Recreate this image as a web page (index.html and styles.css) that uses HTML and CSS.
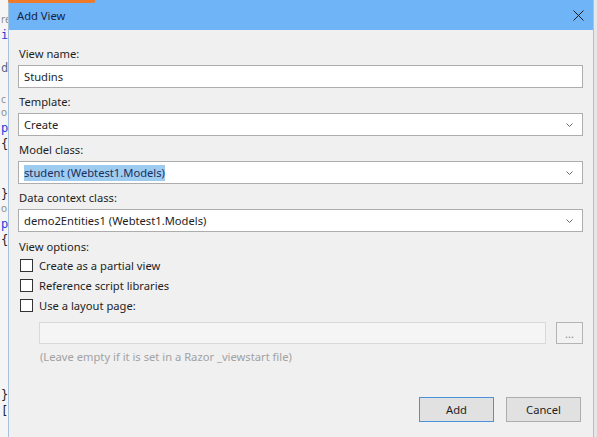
FILE: index.html
```html
<!DOCTYPE html>
<html lang="en">
<head>
  <meta charset="UTF-8">
  <title>Add View</title>
  <link rel="stylesheet" href="styles.css">
</head>
<body>
  <div class="screen">
    <!-- editor peeking out behind the dialog -->
    <div class="editor">
      <div class="gap-top"></div>
      <div class="lens">re</div>
      <div class="code kw">i</div>
      <div class="code"></div>
      <div class="code type">d</div>
      <div class="code"></div>
      <div class="lens">c</div>
      <div class="lens">o</div>
      <div class="code kw">p</div>
      <div class="code">{</div>
      <div class="code"></div>
      <div class="code"></div>
      <div class="code">}</div>
      <div class="lens">o</div>
      <div class="code kw">p</div>
      <div class="code">{</div>
      <div class="code"></div>
      <div class="code"></div>
      <div class="code"></div>
      <div class="code"></div>
      <div class="code"></div>
      <div class="code"></div>
      <div class="code"></div>
      <div class="code"></div>
      <div class="gap-small"></div>
      <div class="code">}</div>
      <div class="code">[</div>
    </div>

    <div class="dialog">
      <div class="titlebar">
        <span class="title">Add View</span>
        <svg class="close" width="11" height="11" viewBox="0 0 11 11">
          <path d="M0.5 0.5 L10.5 10.5 M10.5 0.5 L0.5 10.5" stroke="#1a1a1a" stroke-width="1" fill="none"/>
        </svg>
      </div>

      <div class="dialog-body">
        <div class="field">
          <div class="label">View name:</div>
          <div class="box">Studins</div>
        </div>

        <div class="field">
          <div class="label">Template:</div>
          <div class="box select">
            <span>Create</span>
            <svg class="chevron" width="7" height="4" viewBox="0 0 7 4"><path d="M0.5 0.5 L3.5 3.5 L6.5 0.5" stroke="#6a6a6a" fill="none"/></svg>
          </div>
        </div>

        <div class="field">
          <div class="label">Model class:</div>
          <div class="box select">
            <span class="selected">student (Webtest1.Models)</span>
            <svg class="chevron" width="7" height="4" viewBox="0 0 7 4"><path d="M0.5 0.5 L3.5 3.5 L6.5 0.5" stroke="#6a6a6a" fill="none"/></svg>
          </div>
        </div>

        <div class="field">
          <div class="label">Data context class:</div>
          <div class="box select">
            <span>demo2Entities1 (Webtest1.Models)</span>
            <svg class="chevron" width="7" height="4" viewBox="0 0 7 4"><path d="M0.5 0.5 L3.5 3.5 L6.5 0.5" stroke="#6a6a6a" fill="none"/></svg>
          </div>
        </div>

        <div class="label">View options:</div>
        <div class="check-row"><span class="checkbox"></span>Create as a partial view</div>
        <div class="check-row"><span class="checkbox"></span>Reference script libraries</div>
        <div class="check-row"><span class="checkbox"></span>Use a layout page:</div>

        <div class="layout-row">
          <div class="box disabled"></div>
          <div class="browse">...</div>
        </div>
        <div class="hint">(Leave empty if it is set in a Razor _viewstart file)</div>

        <div class="actions">
          <button class="btn default">Add</button>
          <button class="btn">Cancel</button>
        </div>
      </div>
    </div>

    <div class="edge"></div>
  </div>

  <div class="tab-accent"></div>
</body>
</html>
```

FILE: styles.css
```css
* {
  box-sizing: border-box;
}

body {
  margin: 0;
  font-family: "Noto Sans", sans-serif;
  font-size: 11.2px;
  color: #1e1e1e;
  background: #e8e8e8;
  overflow: hidden;
}

.screen {
  display: flex;
  height: 437px;
}

/* editor strip */
.editor {
  width: 8px;
  flex: none;
  overflow: hidden;
  background: #f5f5f5;
  padding-left: 1px;
  font-family: "DejaVu Sans Mono", monospace;
  font-size: 12px;
  color: #1e1e1e;
  white-space: nowrap;
}

.gap-top {
  height: 13px;
}

.gap-small {
  height: 6px;
}

.code {
  height: 16.5px;
  line-height: 16.5px;
}

.lens {
  height: 13.5px;
  line-height: 13.5px;
  font-size: 10px;
  color: #8c8c8c;
  font-family: "Noto Sans", sans-serif;
}

.kw {
  color: #1b3fd8;
}

.type {
  color: #5a6a8a;
}

/* dialog window */
.dialog {
  width: 586px;
  flex: none;
  display: flex;
  flex-direction: column;
  background: #f0f0f0;
  border-left: 1px solid #a9c2dc;
  border-right: 1px solid #a9c2dc;
}

.titlebar {
  height: 30px;
  flex: none;
  display: flex;
  align-items: center;
  justify-content: space-between;
  padding: 0 9px 0 8px;
  background: #70b4f8;
}

.title {
  color: #14233f;
}

.close {
  display: block;
}

.dialog-body {
  flex: 1;
  display: flex;
  flex-direction: column;
  padding: 16px 10px 15px 9px;
}

.field {
  margin-bottom: 6px;
}

.label {
  height: 16px;
  line-height: 16px;
  margin-bottom: 3px;
  padding-left: 1px;
}

.field + .label {
  margin-top: 1px;
  margin-bottom: 0;
}

.box {
  height: 23px;
  display: flex;
  align-items: center;
  justify-content: space-between;
  padding: 0 9px 0 5px;
  background: #fff;
  border: 1px solid #adadad;
}

.selected {
  line-height: 16px;
  background: #9ecbf0;
  color: #1a2f5c;
}

.chevron {
  display: block;
}

.check-row {
  height: 20px;
  display: flex;
  align-items: center;
  padding-left: 2px;
}

.checkbox {
  width: 13px;
  height: 13px;
  margin-right: 6px;
  background: #fff;
  border: 1px solid #333;
}

.layout-row {
  display: flex;
  gap: 10px;
  margin-top: 7px;
  padding-left: 21px;
}

.box.disabled {
  flex: 1;
  height: 22px;
  background: #f5f5f5;
  border-color: #d9d9d9;
}

.browse {
  width: 27px;
  height: 22px;
  display: flex;
  align-items: center;
  justify-content: center;
  border: 1px solid #b4b4b4;
  background: #f2f2f2;
  color: #8a8a8a;
  font-size: 11px;
  line-height: 1;
}

.hint {
  margin-top: 5px;
  padding-left: 22px;
  line-height: 16px;
  color: #a2a2a2;
}

.actions {
  margin-top: auto;
  display: flex;
  justify-content: flex-end;
  gap: 12px;
  padding-right: 2px;
}

.btn {
  width: 75px;
  height: 25px;
  font-family: "Noto Sans", sans-serif;
  font-size: 11.2px;
  color: #1e1e1e;
  background: #e1e1e1;
  border: 1px solid #adadad;
  padding: 0;
}

.btn.default {
  border-color: #4a93dc;
}

.edge {
  flex: 1;
  background: #e6e6e6;
}

/* orange tab edge showing above the title bar */
.tab-accent {
  position: absolute;
  top: 0;
  left: 8px;
  width: 87px;
  height: 3px;
  background: #ee7a2a;
  border-radius: 0 0 2px 2px;
}
```
